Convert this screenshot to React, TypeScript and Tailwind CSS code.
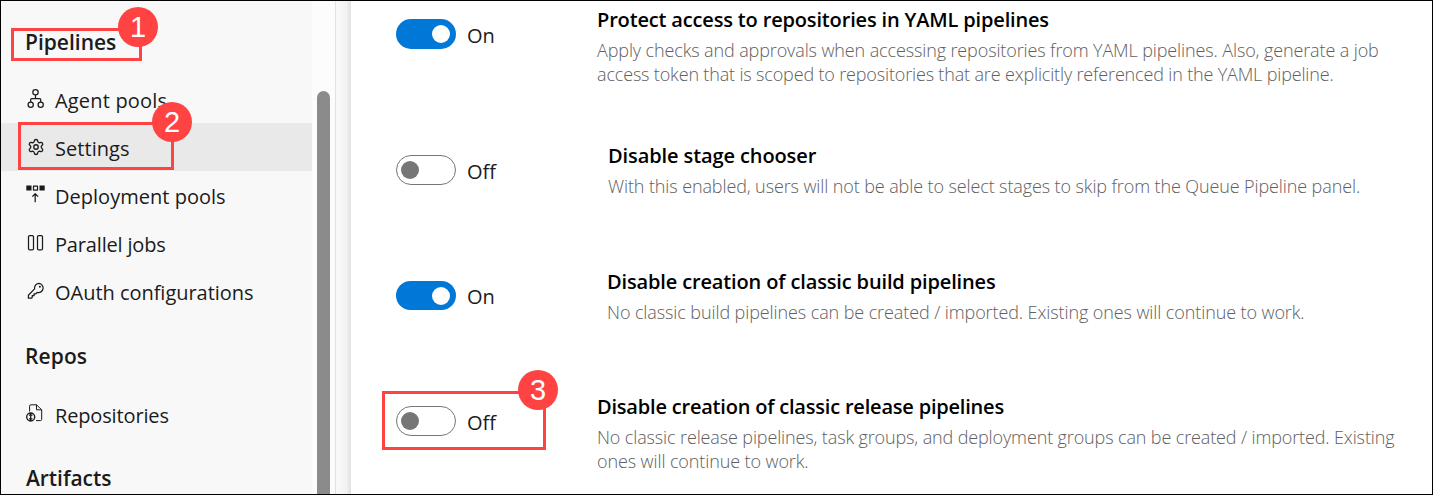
import type { ReactNode } from "react";
import { Settings } from "lucide-react";

function Glyph({ children }: { children: ReactNode }) {
  return (
    <svg
      width="20"
      height="48"
      viewBox="0 0 20 48"
      fill="none"
      stroke="#1b1b1b"
      strokeWidth="1.25"
      strokeLinejoin="round"
      className="shrink-0"
    >
      {children}
    </svg>
  );
}

const agentIcon = (
  <Glyph>
    <circle cx="9.5" cy="17.2" r="2.7" />
    <circle cx="4.7" cy="29.7" r="2.6" />
    <circle cx="14.7" cy="29.7" r="2.6" />
    <path d="M9.5 20v3.5M4.7 27v-2.6q0-.9.9-.9h8.2q.9 0 .9.9V27" />
  </Glyph>
);

const settingsIcon = (
  <span className="flex h-12 w-5 shrink-0 items-center pl-[0.5px]">
    <Settings size={18} strokeWidth={1.75} className="text-[#1b1b1b]" />
  </span>
);

const deploymentIcon = (
  <Glyph>
    <path d="M.3 14.4h5.2v5.2H.3zM13.5 14.4h5.2v5.2h-5.2z" fill="#1b1b1b" stroke="none" />
    <path d="M7.5 15h4v4h-4z" />
    <path d="M9.2 31.3v-8.6M6.3 25.6l2.9-2.9 2.9 2.9" />
  </Glyph>
);

const parallelIcon = (
  <Glyph>
    <rect x="2.5" y="16.5" width="5" height="14.4" rx="1.2" />
    <rect x="11.5" y="16.5" width="5" height="14.4" rx="1.2" />
  </Glyph>
);

const keyIcon = (
  <Glyph>
    <path d="M12.6 16.4a4.6 4.6 0 1 1-1.4 9l-1.3 1.4H8v1.9H6.2v1.8l-.7.7H2.4v-3l6.2-6.3a4.6 4.6 0 0 1 4-5.5z" />
    <circle cx="13.9" cy="19.7" r="1" fill="#1b1b1b" stroke="none" />
  </Glyph>
);

const repoIcon = (
  <Glyph>
    <path d="M3.6 21.5v-5.4q0-1.3 1.3-1.3h5.6l5.2 5v9.6q0 1.2-1.2 1.2H10M10.5 14.8v5h5.2" strokeWidth="1" />
    <circle cx="4.7" cy="27" r="4" strokeWidth="1.4" />
    <path d="M4.7 23v8M2.9 25.2h3.6M2.9 28.8h3.6" strokeWidth="1.3" />
  </Glyph>
);

type Item = { label: string; icon: ReactNode; tracking: string; active?: boolean };

const pipelineItems: Item[] = [
  { label: "Agent pools", icon: agentIcon, tracking: "tracking-[0.18px]" },
  { label: "Settings", icon: settingsIcon, tracking: "tracking-[0.05px]", active: true },
  { label: "Deployment pools", icon: deploymentIcon, tracking: "tracking-[0.02px]" },
  { label: "Parallel jobs", icon: parallelIcon, tracking: "tracking-[-0.17px]" },
  { label: "OAuth configurations", icon: keyIcon, tracking: "tracking-[-0.03px]" },
];

function NavItem({ label, icon, tracking, active }: Item) {
  return (
    <li className={`flex h-12 items-center gap-[9px] pl-[25px] ${active ? "bg-[#e9e9e9]" : ""}`}>
      {icon}
      <span className={`pt-[3px] text-[20px] leading-[27px] text-[#1b1b1b] ${tracking}`}>{label}</span>
    </li>
  );
}

const settings = [
  {
    on: true,
    row: "h-[136px]",
    toggle: "h-[30px]",
    label: "w-[130px] pt-[17px]",
    title: "Protect access to repositories in YAML pipelines",
    titleTracking: "tracking-[-0.16px]",
    lines: [
      { text: "Apply checks and approvals when accessing repositories from YAML pipelines. Also, generate a job", tracking: "tracking-[-0.12px]" },
      { text: "access token that is scoped to repositories that are explicitly referenced in the YAML pipeline.", tracking: "tracking-[-0.16px]" },
    ],
  },
  {
    on: false,
    row: "h-[126px]",
    toggle: "h-[30px]",
    label: "w-[141px] pt-[17px]",
    title: "Disable stage chooser",
    titleTracking: "tracking-[-0.1px]",
    lines: [
      { text: "With this enabled, users will not be able to select stages to skip from the Queue Pipeline panel.", tracking: "tracking-[-0.11px]" },
    ],
  },
  {
    on: true,
    row: "h-[125px]",
    toggle: "h-[29px]",
    label: "w-[140px] pt-4",
    title: "Disable creation of classic build pipelines",
    titleTracking: "tracking-[-0.14px]",
    lines: [
      { text: "No classic build pipelines can be created / imported. Existing ones will continue to work.", tracking: "tracking-[-0.1px]" },
    ],
  },
  {
    on: false,
    row: "h-[102px]",
    toggle: "h-[30px]",
    label: "w-[130px] pt-[17px]",
    title: "Disable creation of classic release pipelines",
    titleTracking: "tracking-[-0.2px]",
    lines: [
      { text: "No classic release pipelines, task groups, and deployment groups can be created / imported. Existing", tracking: "tracking-[-0.13px]" },
      { text: "ones will continue to work.", tracking: "tracking-[-0.11px]" },
    ],
  },
];

function Toggle({ on, height }: { on: boolean; height: string }) {
  return (
    <span
      className={`mt-[14px] flex w-[60px] shrink-0 items-center rounded-full ${height} ${
        on ? "justify-end bg-[#0078d7] pr-[6px]" : "border border-[#767676] bg-white pl-[4px]"
      }`}
    >
      <span className={`size-[18px] rounded-full ${on ? "bg-white" : "bg-[#767676]"}`} />
    </span>
  );
}

function Badge({ n, place }: { n: number; place: string }) {
  return (
    <span
      className={`absolute flex size-10 items-center justify-center rounded-full bg-[#ff4343] font-['Liberation_Sans',sans-serif] text-[29px] leading-none text-white ${place}`}
    >
      {n}
    </span>
  );
}

export default function App() {
  return (
    <div className="relative flex h-[495px] w-[1433px] overflow-hidden border border-black bg-white font-['Open_Sans','Noto_Sans',sans-serif] whitespace-nowrap">
      <nav className="w-[311px] shrink-0 bg-[#f8f8f8] text-[#1b1b1b]">
        <h2 className="h-[74px] pt-[27px] pl-6 text-[21px] leading-[28px] font-semibold">Pipelines</h2>
        <ul>
          {pipelineItems.map((item) => (
            <NavItem key={item.label} {...item} />
          ))}
        </ul>
        <h2 className="h-[75px] pt-[27px] pl-6 text-[21px] leading-[28px] font-semibold tracking-[0.1px]">Repos</h2>
        <ul>
          <NavItem label="Repositories" icon={repoIcon} tracking="tracking-[-0.15px]" />
        </ul>
        <h2 className="pt-[26px] pl-[25px] text-[21px] leading-[28px] font-semibold tracking-[-0.05px]">Artifacts</h2>
      </nav>

      <div className="flex w-[24px] shrink-0 justify-center border-r border-[#e1e1e1] bg-[#fcfcfc] pt-[90px]">
        <div className="h-full w-[13px] rounded-t-full bg-[#8b8b8b]" />
      </div>
      <div className="w-[15px] shrink-0 bg-linear-to-r from-[#f8f8f8] from-20% via-[#f2f2f2] via-70% to-[#e0e0e0]" />

      <main className="flex-1 pt-1 pl-[45px]">
        {settings.map((s) => (
          <section key={s.title} className={`flex items-start ${s.row}`}>
            <Toggle on={s.on} height={s.toggle} />
            <span className={`shrink-0 pl-[11px] text-[20px] leading-[28px] text-[#1b1b1b] ${s.label}`}>
              {s.on ? "On" : "Off"}
            </span>
            <div className="pt-px pl-[11px]">
              <h3 className={`text-[20px] leading-[28px] font-semibold text-black ${s.titleTracking}`}>{s.title}</h3>
              <div className="mt-1 text-[18px] leading-[24px] font-light text-[#606060]">
                {s.lines.map((l) => (
                  <p key={l.text} className={l.tracking}>{l.text}</p>
                ))}
              </div>
            </div>
          </section>
        ))}
      </main>

      <div className="absolute top-[27px] left-[10px] h-[33px] w-[131px] border-3 border-[#ff4343]" />
      <Badge n={1} place="top-[6px] left-[117px]" />
      <div className="absolute top-[121px] left-[17px] h-[48px] w-[156px] border-3 border-[#ff4343]" />
      <Badge n={2} place="top-[101px] left-[151px]" />
      <div className="absolute top-[390px] left-[381px] h-[59px] w-[164px] border-3 border-[#ff4343]" />
      <Badge n={3} place="top-[369px] left-[517px]" />
    </div>
  );
}
